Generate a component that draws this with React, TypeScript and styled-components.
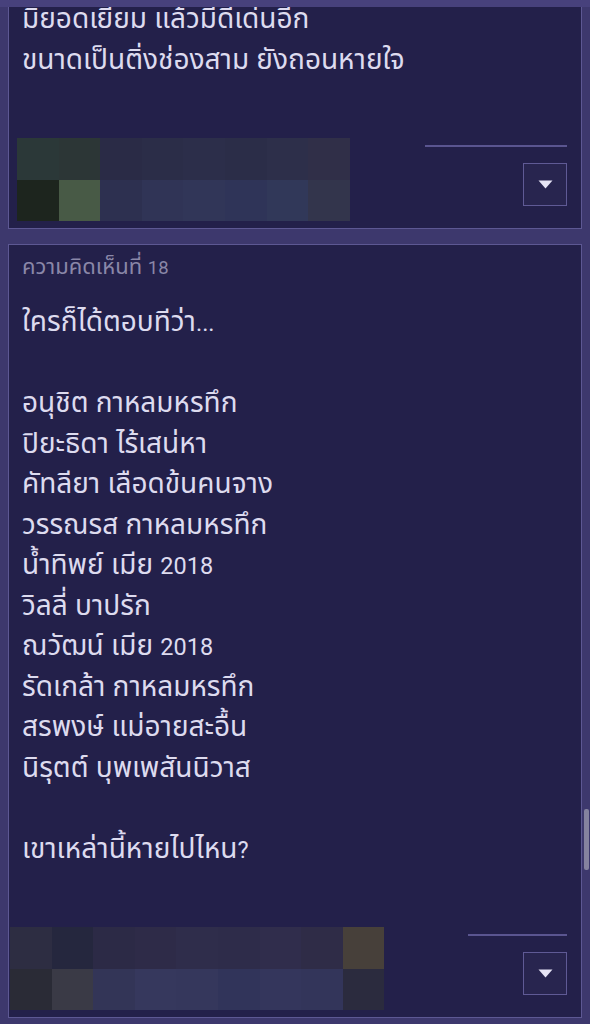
import React from 'react'
import styled, { createGlobalStyle } from 'styled-components'

const GlobalStyle = createGlobalStyle`
    html, body {
        margin: 0;
        padding: 0;
        background: #3d386d;
    }
    body {
        font-family: 'Noto Sans Thai', 'Loma', 'Garuda', 'Tahoma', 'DejaVu Sans', sans-serif;
        overflow: hidden;
    }
`

const Page = styled.div`
    display: flex;
    flex-direction: column;
    gap: 15px;
    padding: 0 8px;
    height: 1024px;
    overflow: hidden;
`

const TopBand = styled.div`
    position: fixed;
    top: 0;
    left: 0;
    right: 0;
    height: 7px;
    background: #47417c;
    z-index: 2;
`

const ScrollThumb = styled.div`
    position: fixed;
    top: 809px;
    right: 1px;
    width: 5px;
    height: 61px;
    border-radius: 2px;
    background: #85829f;
    z-index: 2;
`

const Card = styled.div<{ $cut?: boolean }>`
    display: flex;
    flex-direction: column;
    flex-shrink: 0;
    background: #23204a;
    border: 1.5px solid #5d5893;
    border-top-width: ${({ $cut }) => ($cut ? '0' : '1.5px')};
    padding: ${({ $cut }) => ($cut ? '0' : '11px')} 14px 7px 0;
`

const Label = styled.div`
    font-size: 22px;
    line-height: 24px;
    color: #8a87a8;
    padding-left: 13px;
    margin-bottom: 23px;
`

const Body = styled.div`
    font-size: 28px;
    line-height: 40.5px;
    color: #dddbef;
    padding-left: 13px;
    margin-bottom: 57px;
    white-space: pre-line;
`

// latin runs (digits, punctuation) sit smaller than the thai glyphs
const Latin = styled.span<{ $size: number }>`
    font-family: Roboto, 'Noto Sans', sans-serif;
    font-size: ${({ $size }) => $size}px;
    line-height: 1;
`

const Footer = styled.div`
    display: flex;
    justify-content: space-between;
    align-items: flex-start;
`

const Mosaic = styled.div<{ $cols: number; $inset: number }>`
    display: grid;
    grid-template-columns: repeat(${({ $cols }) => $cols}, 41.6px);
    grid-auto-rows: 41.5px;
    margin-left: ${({ $inset }) => $inset}px;
    filter: blur(0.6px);
`

const Tile = styled.div<{ $c: string }>`
    background: ${({ $c }) => $c};
`

const Actions = styled.div`
    display: flex;
    flex-direction: column;
    align-items: flex-end;
    padding-top: 7px;
    gap: 16px;
`

const Rule = styled.div<{ $w: number }>`
    width: ${({ $w }) => $w}px;
    height: 2px;
    background: #5a5590;
`

const MenuButton = styled.button`
    display: flex;
    align-items: center;
    justify-content: center;
    width: 44px;
    height: 43px;
    padding: 0;
    background: #28254f;
    border: 1.5px solid #5f5a95;
    cursor: pointer;
`

const Caret = () => (
    <svg width='15' height='9' viewBox='0 0 15 9'>
        <path d='M0.5 0.5 H14.5 L7.5 8.5 Z' fill='#e6e4f5' />
    </svg>
)

const mixed = (text: string, size: number) =>
    text.split(/([0-9?.]+)/).map((part, i) =>
        /^[0-9?.]+$/.test(part) ? <Latin key={i} $size={size}>{part}</Latin> : part
    )

const firstTiles = [
    '#2b3838', '#2c3636', '#2a2b46', '#2b2d48', '#2c2e4a', '#2b2d48', '#2d2f4a', '#302f48',
    '#1d251e', '#485a46', '#2d3050', '#303456', '#313658', '#2f3458', '#313859', '#33354c',
]

const secondTiles = [
    '#2d2d42', '#25273e', '#2c2a46', '#2e2b48', '#2f2d4b', '#2e2c4a', '#302d4c', '#2f2c47', '#47403a',
    '#2a2b36', '#3a3a46', '#333557', '#36385d', '#35375c', '#31345a', '#34365c', '#33355a', '#2b2b3e',
]

type CommentProps = {
    label?: string
    text: string
    tiles: string[]
    cols: number
    inset: number
    rule: number
    cut?: boolean
}

const Comment = ({ label, text, tiles, cols, inset, rule, cut }: CommentProps) => (
    <Card $cut={cut}>
        {label && <Label>{mixed(label, 18.5)}</Label>}
        <Body>{mixed(text, 23.5)}</Body>
        <Footer>
            <Mosaic $cols={cols} $inset={inset}>
                {tiles.map((c, i) => <Tile key={i} $c={c} />)}
            </Mosaic>
            <Actions>
                <Rule $w={rule} />
                <MenuButton aria-label='more'>
                    <Caret />
                </MenuButton>
            </Actions>
        </Footer>
    </Card>
)

const comment18 = [
    'ใครก็ได้ตอบทีว่า...',
    '',
    'อนุชิต กาหลมหรทึก',
    'ปิยะธิดา ไร้เสน่หา',
    'คัทลียา เลือดข้นคนจาง',
    'วรรณรส กาหลมหรทึก',
    'น้ำทิพย์ เมีย 2018',
    'วิลลี่ บาปรัก',
    'ณวัฒน์ เมีย 2018',
    'รัดเกล้า กาหลมหรทึก',
    'สรพงษ์ แม่อายสะอื้น',
    'นิรุตต์ บุพเพสันนิวาส',
    '',
    'เขาเหล่านี้หายไปไหน?',
].join('\n')

export default function App() {
    return (
        <>
            <GlobalStyle />
            <TopBand />
            <ScrollThumb />
            <Page>
                <Comment
                    cut
                    text={'มิยอดเยียม แล้วมีดีเด่นอีก\nขนาดเป็นติ่งช่องสาม ยังถอนหายใจ'}
                    tiles={firstTiles}
                    cols={8}
                    inset={8}
                    rule={142}
                />
                <Comment
                    label='ความคิดเห็นที่ 18'
                    text={comment18}
                    tiles={secondTiles}
                    cols={9}
                    inset={1}
                    rule={99}
                />
            </Page>
        </>
    )
}
